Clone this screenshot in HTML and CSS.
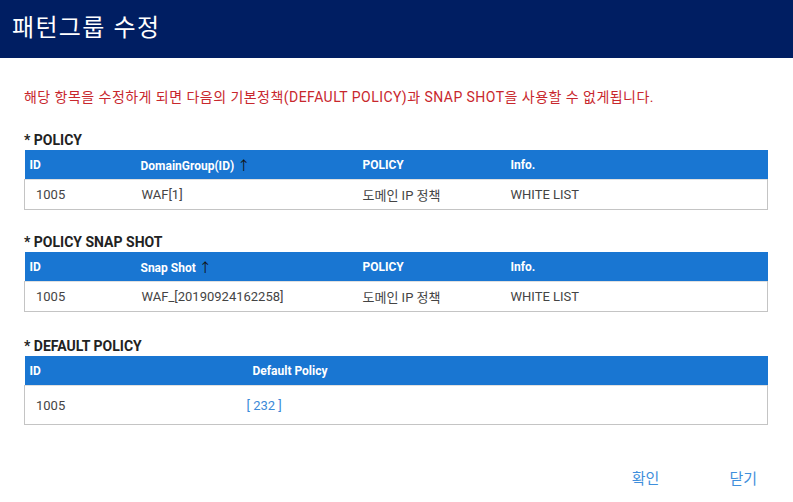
FILE: index.html
```html
<!DOCTYPE html>
<html lang="ko">
<head>
  <meta charset="UTF-8">
  <title>패턴그룹 수정</title>
  <link rel="stylesheet" href="styles.css">
</head>
<body>
  <div class="dialog">
    <div class="dialog-title">패턴그룹 수정</div>

    <div class="dialog-body">
      <p class="warning">해당 항목을 수정하게 되면 다음의 기본정책(DEFAULT POLICY)과 SNAP SHOT을 사용할 수 없게됩니다.</p>

      <div class="section">
        <div class="section-label">* POLICY</div>
        <table class="grid">
          <colgroup>
            <col style="width: 111px">
            <col style="width: 222px">
            <col style="width: 148px">
            <col>
          </colgroup>
          <thead>
            <tr>
              <th>ID</th>
              <th>DomainGroup(ID) <span class="sort">&#8593;</span></th>
              <th>POLICY</th>
              <th>Info.</th>
            </tr>
          </thead>
          <tbody>
            <tr>
              <td class="first">1005</td>
              <td class="second">WAF[1]</td>
              <td>도메인 IP 정책</td>
              <td>WHITE LIST</td>
            </tr>
          </tbody>
        </table>
      </div>

      <div class="section">
        <div class="section-label">* POLICY SNAP SHOT</div>
        <table class="grid">
          <colgroup>
            <col style="width: 111px">
            <col style="width: 222px">
            <col style="width: 148px">
            <col>
          </colgroup>
          <thead>
            <tr>
              <th>ID</th>
              <th>Snap Shot <span class="sort">&#8593;</span></th>
              <th>POLICY</th>
              <th>Info.</th>
            </tr>
          </thead>
          <tbody>
            <tr>
              <td class="first">1005</td>
              <td class="second">WAF_[20190924162258]</td>
              <td>도메인 IP 정책</td>
              <td>WHITE LIST</td>
            </tr>
          </tbody>
        </table>
      </div>

      <div class="section section-default">
        <div class="section-label">* DEFAULT POLICY</div>
        <table class="grid grid-tall">
          <colgroup>
            <col style="width: 222px">
            <col>
          </colgroup>
          <thead>
            <tr>
              <th>ID</th>
              <th class="policy-head">Default Policy</th>
            </tr>
          </thead>
          <tbody>
            <tr>
              <td class="first">1005</td>
              <td class="policy-link"><a href="#">[ 232 ]</a></td>
            </tr>
          </tbody>
        </table>
      </div>
    </div>

    <div class="dialog-actions">
      <button type="button" class="btn">확인</button>
      <button type="button" class="btn">닫기</button>
    </div>
  </div>
</body>
</html>
```

FILE: styles.css
```css
body {
  margin: 0;
  background: #fff;
  font-family: 'Roboto', 'Noto Sans CJK KR', sans-serif;
  color: #333;
}

.dialog {
  width: 793px;
  height: 502px;
  background: #fff;
}

.dialog-title {
  background: #001e62;
  color: #fff;
  height: 58px;
  line-height: 52px;
  padding-left: 12px;
  font-size: 24px;
  font-family: 'Noto Sans CJK KR', sans-serif;
  letter-spacing: 1.3px;
}

.dialog-body {
  padding: 0 25px 0 24px;
}

.warning {
  margin: 29px 0 0;
  font-size: 14px;
  line-height: 20px;
  letter-spacing: 0.46px;
  color: #c8272d;
}

.section {
  margin-top: 21px;
}

.section + .section {
  margin-top: 20px;
}

.section.section-default {
  margin-top: 22px;
}

.section-label {
  font-size: 14px;
  font-weight: bold;
  color: #222;
  line-height: 20px;
  padding-top: 2px;
}

.grid {
  width: 744px;
  border-collapse: collapse;
  table-layout: fixed;
  font-size: 13px;
}

.grid th {
  background: #1976d2;
  color: #fff;
  font-size: 12px;
  font-weight: bold;
  text-align: left;
  height: 29px;
  padding: 0 0 0 5px;
}

.grid td {
  height: 29px;
  padding: 0 0 0 5px;
  color: #444;
  border-top: 1px solid #e0e0e0;
  border-bottom: 1px solid #c4c4c4;
}

.grid td:first-child {
  border-left: 1px solid #c4c4c4;
}

.grid td:last-child {
  border-right: 1px solid #c4c4c4;
}

.grid td.first {
  padding-left: 11px;
}

.grid td.second {
  padding-left: 6px;
}

.sort {
  color: #111;
  font-weight: normal;
  font-size: 13px;
}

.grid-tall td {
  height: 38px;
}

.grid th.policy-head {
  padding-left: 6px;
}

.grid td.policy-link {
  padding-left: 0;
}

.policy-link a {
  color: #3c8ad8;
  text-decoration: none;
}

.dialog-actions {
  display: flex;
  justify-content: flex-end;
  gap: 70px;
  padding: 42px 36px 0 0;
}

.btn {
  background: none;
  border: none;
  padding: 0;
  font-family: 'Noto Sans CJK KR', sans-serif;
  font-size: 15px;
  color: #3f8fdc;
  cursor: pointer;
}
```
